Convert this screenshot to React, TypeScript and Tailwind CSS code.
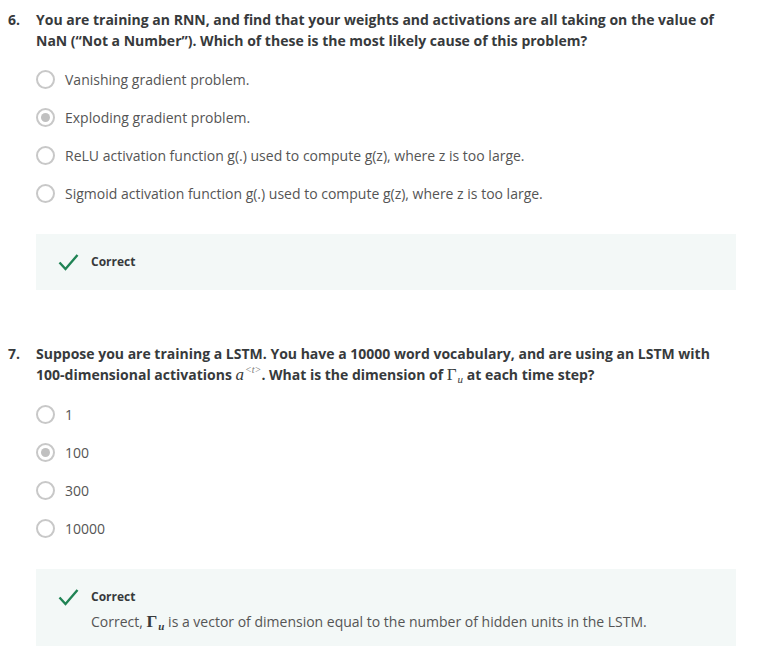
import React from "react";

const serif = "font-['Liberation_Serif','DejaVu_Serif',serif]";

function Radio({ checked }: { checked?: boolean }) {
  return (
    <span className="flex h-[19px] w-[19px] shrink-0 items-center justify-center rounded-full border-2 border-[#c8c8c8] bg-white">
      {checked && <span className="h-[9px] w-[9px] rounded-full bg-[#c0c0c0]" />}
    </span>
  );
}

function Option({ label, checked }: { label: React.ReactNode; checked?: boolean }) {
  return (
    <div className="flex h-[38px] items-center gap-[10px] pl-[28px]">
      <Radio checked={checked} />
      <span className="text-[14px] text-[#555]">{label}</span>
    </div>
  );
}

function Check() {
  return (
    <svg width="21" height="18" viewBox="0 0 21 18" className="shrink-0">
      <polyline points="1.5,9.5 7.5,16 19.5,2" fill="none" stroke="#1f8354" strokeWidth="2.4" />
    </svg>
  );
}

// Γ with italic subscript u, kept at leading-none so it doesn't grow the line
function Gamma({ bold }: { bold?: boolean }) {
  return (
    <span className={`${serif} inline-block text-[17px] leading-none text-[#373a3c] ${bold ? "font-bold" : "font-normal"}`}>
      Γ<span className="relative top-[3px] ml-[1px] text-[11px] italic">u</span>
    </span>
  );
}

function Question({ n, children }: { n: string; children: React.ReactNode }) {
  return (
    <div className="flex text-[14px] font-bold leading-[21px] text-[#373a3c]">
      <span className="w-7 shrink-0">{n}</span>
      <div>{children}</div>
    </div>
  );
}

export default function App() {
  return (
    <div className="min-h-[656px] bg-white pl-2 pr-[42px] pt-[9px] font-['Open_Sans','Liberation_Sans',sans-serif]">
      <Question n="6.">
        You are training an RNN, and find that your weights and activations are all taking on the value of
        NaN (“Not a Number”). Which of these is the most likely cause of this problem?
      </Question>
      <div className="mt-[9px]">
        <Option label="Vanishing gradient problem." />
        <Option label="Exploding gradient problem." checked />
        <Option label="ReLU activation function g(.) used to compute g(z), where z is too large." />
        <Option label="Sigmoid activation function g(.) used to compute g(z), where z is too large." />
      </div>
      <div className="ml-7 mt-[22px] flex items-center gap-3 bg-[#f3f8f7] px-[22px] py-[18px]">
        <Check />
        <span className="text-[12px] font-bold leading-5 text-[#373a3c]">Correct</span>
      </div>

      <div className="mt-[53px]">
        <Question n="7.">
          Suppose you are training a LSTM. You have a 10000 word vocabulary, and are using an LSTM with
          100-dimensional activations{" "}
          <span className={`${serif} inline-block text-[17px] font-normal italic leading-none`}>
            a
            <span className="relative -top-[7px] ml-[1px] text-[10px] text-[#777]">&lt;t&gt;</span>
          </span>
          . What is the dimension of <Gamma /> at each time step?
        </Question>
      </div>
      <div className="mt-[10px]">
        <Option label="1" />
        <Option label="100" checked />
        <Option label="300" />
        <Option label="10000" />
      </div>
      <div className="ml-7 mt-[22px] flex gap-3 bg-[#f3f8f7] px-[22px] pb-[12px] pt-[18px]">
        <div className="pt-[1px]">
          <Check />
        </div>
        <div>
          <div className="text-[12px] font-bold leading-5 text-[#373a3c]">Correct</div>
          <div className="mt-[3px] text-[14px] leading-6 text-[#555]">
            Correct, <Gamma bold /> is a vector of dimension equal to the number of hidden units in the LSTM.
          </div>
        </div>
      </div>
    </div>
  );
}
